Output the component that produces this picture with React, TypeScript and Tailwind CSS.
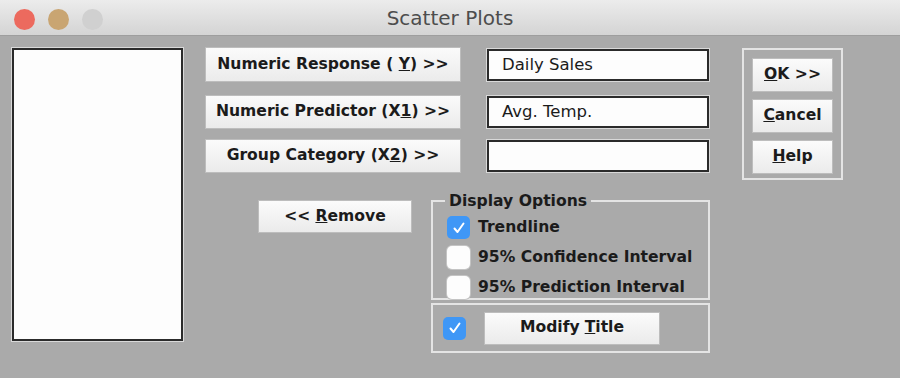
import React from 'react';

const font = { fontFamily: '"DejaVu Sans", Verdana, sans-serif' };

function Btn({ children, className = '' }: { children: React.ReactNode; className?: string }) {
  return (
    <div
      className={`flex items-center justify-center bg-gradient-to-b from-[#fbfbfb] to-[#ebebeb] text-[15.6px] font-bold text-[#1b1b1b] shadow-[0_0_0_1px_#bdbdbd] ${className}`}
    >
      {children}
    </div>
  );
}

function Field({ value }: { value: string }) {
  return (
    <div className="h-[32px] w-[222px] border-2 border-[#2b2b2b] bg-[#fdfdfd] pl-[13px] text-[16.5px] leading-[28px] text-[#1b1b1b] shadow-[0_0_0_1px_#d9d9d9]">
      {value}
    </div>
  );
}

function Check({ on }: { on: boolean }) {
  return on ? (
    <div className="flex h-[23px] w-[23px] items-center justify-center rounded-[5px] bg-[#3f97f6]">
      <svg width="14" height="14" viewBox="0 0 14 14">
        <path d="M2.5 7.5 L5.5 11 L11.5 2.5" fill="none" stroke="white" strokeWidth="2" strokeLinecap="round" strokeLinejoin="round" />
      </svg>
    </div>
  ) : (
    <div className="h-[23px] w-[23px] rounded-[5px] bg-[#fdfdfd] shadow-[0_0_0_1px_#c4c4c4]" />
  );
}

export default function App() {
  return (
    <div className="h-[378px] w-[900px] overflow-hidden bg-[#aaaaaa]" style={font}>
      {/* title bar */}
      <div className="relative flex h-[36px] items-center justify-center border-b border-[#9e9e9e] bg-gradient-to-b from-[#ececec] to-[#d4d4d4]">
        <div className="absolute left-[14px] top-[9px] flex gap-[13px]">
          <div className="h-[21px] w-[21px] rounded-full bg-[#ec6a5e]" />
          <div className="h-[21px] w-[21px] rounded-full bg-[#c9a572]" />
          <div className="h-[21px] w-[21px] rounded-full bg-[#d0d0d0]" />
        </div>
        <span className="text-[20px] text-[#4d4d4d]">Scatter Plots</span>
      </div>

      <div className="flex pl-[12px] pt-[12px]">
        {/* variable list */}
        <div className="h-[293px] w-[171px] border-2 border-[#2b2b2b] bg-[#fdfdfd] shadow-[0_0_0_1px_#d9d9d9]" />

        {/* middle */}
        <div className="ml-[23px] flex w-[504px] flex-col">
          <div className="flex items-center gap-[27px]">
            <Btn className="h-[33px] w-[254px]">
              Numeric Response (&nbsp;<u>Y</u>) &gt;&gt;
            </Btn>
            <Field value="Daily Sales" />
          </div>
          <div className="mt-[15px] flex items-center gap-[27px]">
            <Btn className="h-[32px] w-[254px]">
              Numeric Predictor (X<u>1</u>) &gt;&gt;
            </Btn>
            <Field value="Avg. Temp." />
          </div>
          <div className="mt-[12px] flex items-center gap-[27px]">
            <Btn className="h-[32px] w-[254px]">
              Group Category (X<u>2</u>) &gt;&gt;
            </Btn>
            <Field value="" />
          </div>

          <div className="mt-[28px] flex">
            <Btn className="ml-[53px] mt-[1px] h-[31px] w-[152px]">
              &lt;&lt; <u className="ml-[5px]">R</u>emove
            </Btn>
            <div className="ml-[20px] flex w-[279px] flex-col">
              <div className="relative h-[100px] border-2 border-[#e4e4e4] px-[14px] pt-[14px]">
                <span className="absolute left-[12px] top-[-11px] bg-[#aaaaaa] px-[4px] text-[15.6px] font-bold leading-[20px] text-[#1b1b1b]">
                  Display Options
                </span>
                <div className="flex flex-col gap-[7px] text-[15.6px] font-bold text-[#1b1b1b]">
                  <label className="flex h-[23px] items-center gap-[8px]">
                    <Check on />
                    Trendline
                  </label>
                  <label className="flex h-[23px] items-center gap-[8px]">
                    <Check on={false} />
                    95% Confidence Interval
                  </label>
                  <label className="flex h-[23px] items-center gap-[8px]">
                    <Check on={false} />
                    95% Prediction Interval
                  </label>
                </div>
              </div>
              <div className="mt-[3px] flex h-[50px] items-center border-2 border-[#e4e4e4] pl-[10px]">
                <Check on />
                <Btn className="ml-[19px] h-[31px] w-[174px]">
                  Modify <u className="ml-[5px]">T</u>itle
                </Btn>
              </div>
            </div>
          </div>
        </div>

        {/* right buttons */}
        <div className="ml-[32px] flex h-[132px] w-[101px] flex-col items-center gap-[9px] border-2 border-[#e4e4e4] pt-[9px]">
          <Btn className="h-[32px] w-[79px]">
            <u>O</u>K &gt;&gt;
          </Btn>
          <Btn className="h-[32px] w-[79px]">
            <u>C</u>ancel
          </Btn>
          <Btn className="h-[32px] w-[79px]">
            <u>H</u>elp
          </Btn>
        </div>
      </div>
    </div>
  );
}
